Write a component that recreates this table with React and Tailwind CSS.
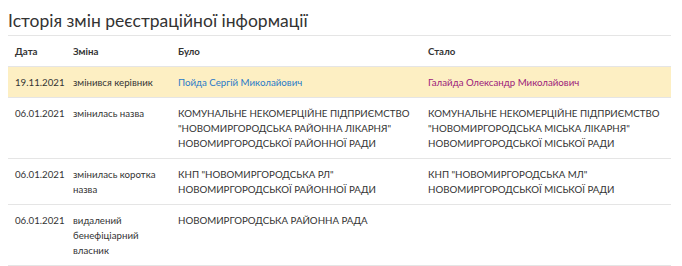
const rows = [
  {
    date: '19.11.2021',
    change: 'змінився керівник',
    was: 'Пойда Сергій Миколайович',
    now: 'Галайда Олександр Миколайович',
    person: true,
  },
  {
    date: '06.01.2021',
    change: 'змінилась назва',
    was: 'КОМУНАЛЬНЕ НЕКОМЕРЦІЙНЕ ПІДПРИЄМСТВО "НОВОМИРГОРОДСЬКА РАЙОННА ЛІКАРНЯ" НОВОМИРГОРОДСЬКОЇ РАЙОННОЇ РАДИ',
    now: 'КОМУНАЛЬНЕ НЕКОМЕРЦІЙНЕ ПІДПРИЄМСТВО "НОВОМИРГОРОДСЬКА МІСЬКА ЛІКАРНЯ" НОВОМИРГОРОДСЬКОЇ МІСЬКОЇ РАДИ',
  },
  {
    date: '06.01.2021',
    change: 'змінилась коротка назва',
    was: 'КНП "НОВОМИРГОРОДСЬКА РЛ" НОВОМИРГОРОДСЬКОЇ РАЙОННОЇ РАДИ',
    now: 'КНП "НОВОМИРГОРОДСЬКА МЛ" НОВОМИРГОРОДСЬКОЇ МІСЬКОЇ РАДИ',
  },
  {
    date: '06.01.2021',
    change: 'видалений бенефіціарний власник',
    was: 'НОВОМИРГОРОДСЬКА РАЙОННА РАДА',
    now: '',
  },
]

export default function App() {
  return (
    <div className="bg-white px-2 pt-[9px] text-[#333]" style={{ fontFamily: 'Lato, "Open Sans", sans-serif' }}>
      <h2 className="w-[663px] border-b border-[#e5e5e5] pb-[2px] text-[17.5px] leading-[24px] text-[#333]">
        Історія змін реєстраційної інформації
      </h2>
      <table className="w-[663px] table-fixed border-collapse text-[9.7px] leading-[15px]">
        <colgroup>
          <col className="w-[58px]" />
          <col className="w-[105px]" />
          <col className="w-[250px]" />
          <col className="w-[250px]" />
        </colgroup>
        <thead>
          <tr className="border-b border-[#e5e5e5]">
            {['Дата', 'Зміна', 'Було', 'Стало'].map((h) => (
              <th key={h} className="px-[7px] pt-[8px] pb-[7px] text-left font-bold">{h}</th>
            ))}
          </tr>
        </thead>
        <tbody>
          {rows.map((r, i) => (
            <tr key={i} className={`border-b border-[#e5e5e5] align-top ${r.person ? 'bg-[#fdefc3]' : ''}`}>
              <td className="px-[7px] pt-[8px] pb-[7px]">{r.date}</td>
              <td className="px-[7px] pt-[8px] pb-[7px]">{r.change}</td>
              <td className={`px-[7px] pt-[8px] pb-[7px] ${r.person ? 'text-[#2a7ac8]' : ''}`}>{r.was}</td>
              <td className={`px-[7px] pt-[8px] pb-[7px] ${r.person ? 'text-[#9c1a7a]' : ''}`}>{r.now}</td>
            </tr>
          ))}
        </tbody>
      </table>
    </div>
  )
}
